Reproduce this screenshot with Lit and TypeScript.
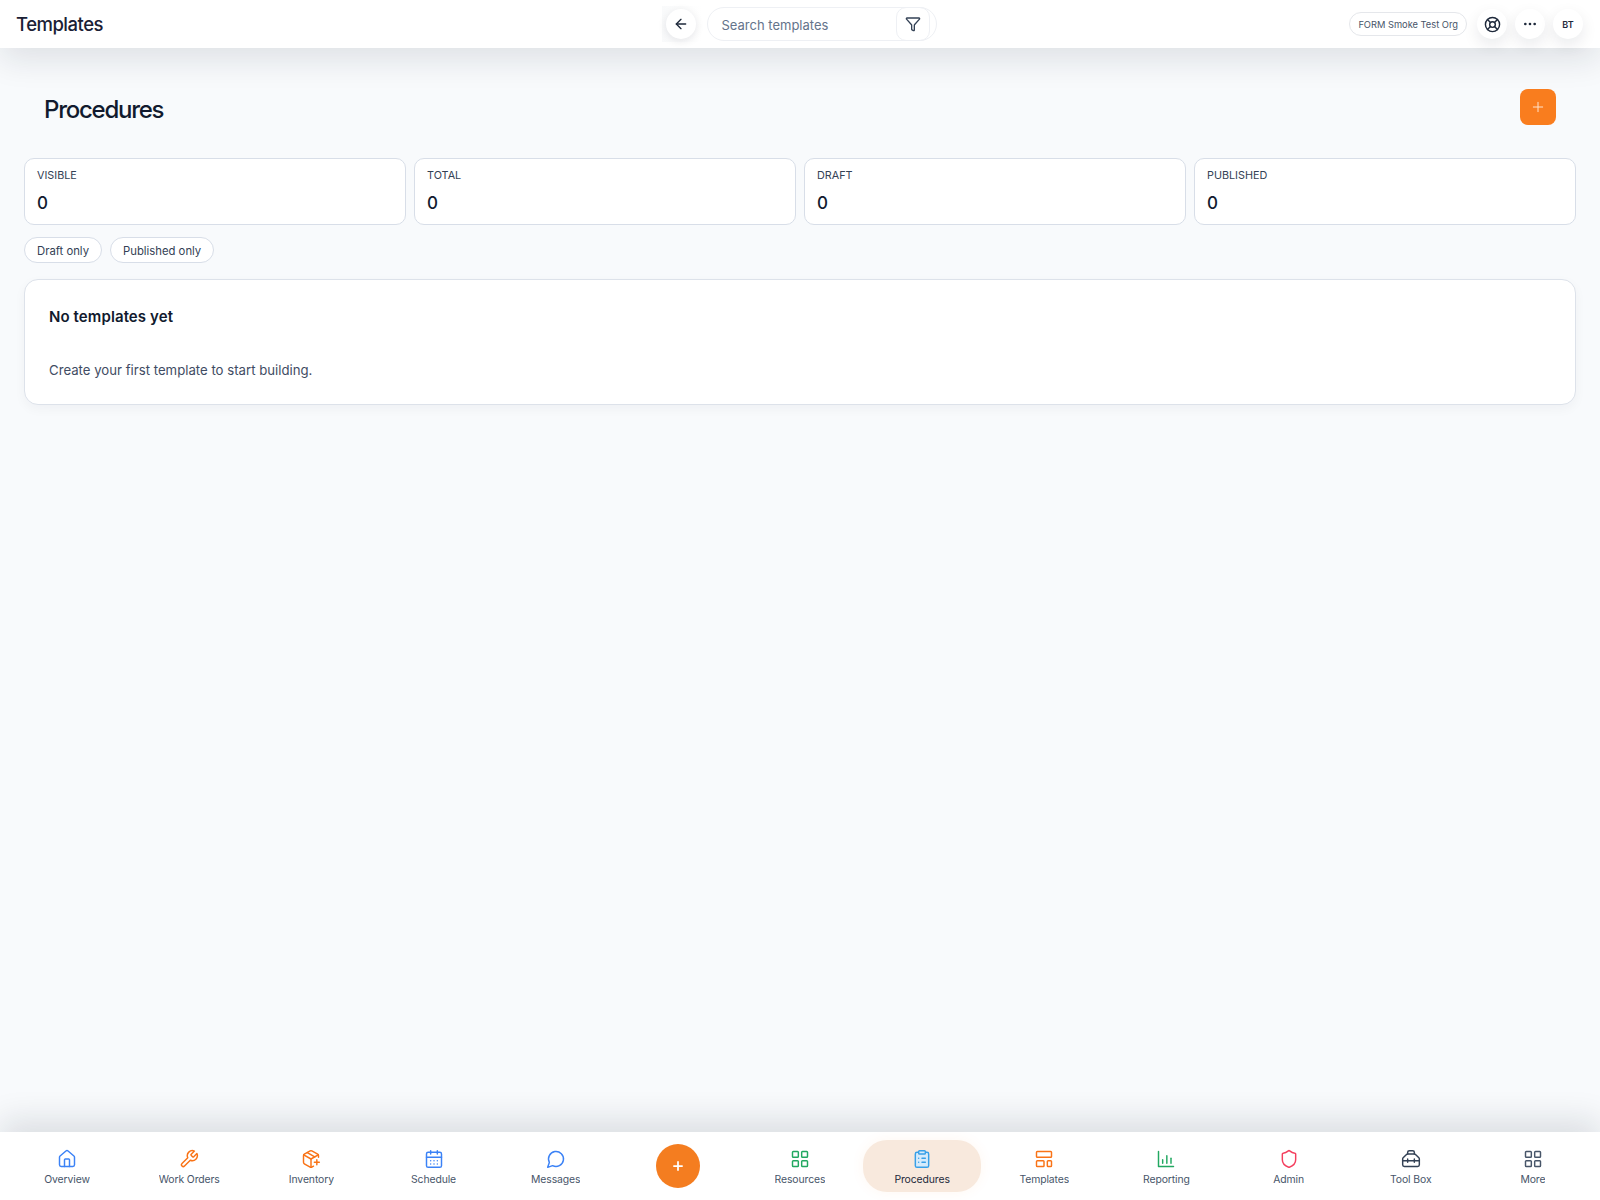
import { LitElement, html, svg, css } from 'lit';
import { customElement } from 'lit/decorators.js';

const ICONS: Record<string, unknown> = {
  home: svg`<path d="M15 21v-8a1 1 0 0 0-1-1h-4a1 1 0 0 0-1 1v8"/><path d="M3 10a2 2 0 0 1 .709-1.528l7-5.999a2 2 0 0 1 2.582 0l7 5.999A2 2 0 0 1 21 10v9a2 2 0 0 1-2 2H5a2 2 0 0 1-2-2z"/>`,
  wrench: svg`<path d="M14.7 6.3a1 1 0 0 0 0 1.4l1.6 1.6a1 1 0 0 0 1.4 0l3.77-3.77a6 6 0 0 1-7.94 7.94l-6.91 6.91a2.12 2.12 0 0 1-3-3l6.91-6.91a6 6 0 0 1 7.94-7.94l-3.76 3.76z"/>`,
  packagePlus: svg`<path d="M16 16h6"/><path d="M19 13v6"/><path d="M21 10V8a2 2 0 0 0-1-1.73l-7-4a2 2 0 0 0-2 0l-7 4A2 2 0 0 0 3 8v8a2 2 0 0 0 1 1.73l7 4a2 2 0 0 0 2 0l2-1.14"/><path d="M16.5 9.4 7.55 4.24"/><path d="M3.29 7 12 12l8.71-5"/><path d="M12 22V12"/>`,
  calendar: svg`<path d="M8 2v4"/><path d="M16 2v4"/><rect x="3" y="4" width="18" height="18" rx="2"/><path d="M3 10h18"/><path d="M8 14h.01"/><path d="M12 14h.01"/><path d="M16 14h.01"/><path d="M8 18h.01"/><path d="M12 18h.01"/><path d="M16 18h.01"/>`,
  message: svg`<path d="M7.9 20A9 9 0 1 0 4 16.1L2 22Z"/>`,
  grid: svg`<rect x="3" y="3" width="7" height="7" rx="1"/><rect x="14" y="3" width="7" height="7" rx="1"/><rect x="14" y="14" width="7" height="7" rx="1"/><rect x="3" y="14" width="7" height="7" rx="1"/>`,
  clipboard: svg`<path fill="#d6ebfb" d="M16 4h2a2 2 0 0 1 2 2v14a2 2 0 0 1-2 2H6a2 2 0 0 1-2-2V6a2 2 0 0 1 2-2h2"/><rect x="8" y="2" width="8" height="4" rx="1" fill="#d6ebfb"/><path d="M12 11h4"/><path d="M12 16h4"/><path d="M8 11h.01"/><path d="M8 16h.01"/>`,
  template: svg`<rect x="3" y="3" width="18" height="7" rx="1"/><rect x="3" y="14" width="9" height="7" rx="1"/><rect x="16" y="14" width="5" height="7" rx="1"/>`,
  chart: svg`<path d="M3 3v18h18"/><path d="M8 17v-4"/><path d="M13 17V8"/><path d="M18 17v-6"/>`,
  shield: svg`<path d="M20 13c0 5-3.5 7.5-7.66 8.95a1 1 0 0 1-.67-.01C7.5 20.5 4 18 4 13V6a1 1 0 0 1 1-1c2 0 4.5-1.2 6.24-2.72a1.17 1.17 0 0 1 1.52 0C14.51 3.81 17 5 19 5a1 1 0 0 1 1 1z"/>`,
  toolbox: svg`<path d="M16 12v4"/><path d="M16 6a2 2 0 0 1 1.414.586l4 4A2 2 0 0 1 22 12v7a2 2 0 0 1-2 2H4a2 2 0 0 1-2-2v-7a2 2 0 0 1 .586-1.414l4-4A2 2 0 0 1 8 6z"/><path d="M16 6V4a2 2 0 0 0-2-2h-4a2 2 0 0 0-2 2v2"/><path d="M2 14h20"/><path d="M8 12v4"/>`,
  buoy: svg`<circle cx="12" cy="12" r="10"/><circle cx="12" cy="12" r="4"/><path d="m4.93 4.93 4.24 4.24"/><path d="m14.83 9.17 4.24-4.24"/><path d="m14.83 14.83 4.24 4.24"/><path d="m9.17 14.83-4.24 4.24"/>`,
  funnel: svg`<path d="M10 20a1 1 0 0 0 .553.895l2 1A1 1 0 0 0 14 21v-7a2 2 0 0 1 .517-1.341L21.74 4.67A1 1 0 0 0 21 3H3a1 1 0 0 0-.742 1.67l7.225 7.989A2 2 0 0 1 10 14z"/>`,
  back: svg`<path d="m12 19-7-7 7-7"/><path d="M19 12H5"/>`,
  plus: svg`<path d="M5 12h14"/><path d="M12 5v14"/>`,
  dots: svg`<circle cx="5" cy="12" r="1"/><circle cx="12" cy="12" r="1"/><circle cx="19" cy="12" r="1"/>`
};

const icon = (name: string, size: number, color: string, sw = 2) => html`<svg
  width=${size}
  height=${size}
  viewBox="0 0 24 24"
  fill="none"
  stroke=${color}
  stroke-width=${sw}
  stroke-linecap="round"
  stroke-linejoin="round"
>${ICONS[name]}</svg>`;

const STATS = [
  { label: 'VISIBLE', value: 0 },
  { label: 'TOTAL', value: 0 },
  { label: 'DRAFT', value: 0 },
  { label: 'PUBLISHED', value: 0 }
];

const NAV = [
  { label: 'Overview', icon: 'home', color: '#3b82f6' },
  { label: 'Work Orders', icon: 'wrench', color: '#f97316' },
  { label: 'Inventory', icon: 'packagePlus', color: '#f97316' },
  { label: 'Schedule', icon: 'calendar', color: '#3b82f6' },
  { label: 'Messages', icon: 'message', color: '#3b82f6' },
  { fab: true },
  { label: 'Resources', icon: 'grid', color: '#22a861' },
  { label: 'Procedures', icon: 'clipboard', color: '#38a0e8', active: true },
  { label: 'Templates', icon: 'template', color: '#f97316' },
  { label: 'Reporting', icon: 'chart', color: '#22a861' },
  { label: 'Admin', icon: 'shield', color: '#f43f5e' },
  { label: 'Tool Box', icon: 'toolbox', color: '#334155' },
  { label: 'More', icon: 'grid', color: '#475569' }
] as Array<{ label?: string; icon?: string; color?: string; active?: boolean; fab?: boolean }>;

@customElement('app-root')
export class AppRoot extends LitElement {
  static styles = css`
    :host {
      display: flex;
      flex-direction: column;
      height: 1200px;
      background: #f8fafc;
      font-family: Inter, 'Noto Sans', sans-serif;
      color: #111827;
      overflow: hidden;
    }

    .topbar {
      flex: none;
      position: relative;
      z-index: 2;
      height: 48px;
      display: grid;
      grid-template-columns: 1fr auto 1fr;
      align-items: center;
      padding: 0 17px 0 16px;
      background: #fff;
      box-shadow: 0 12px 32px rgba(15, 23, 42, 0.11);
    }
    .page-name {
      font-size: 18.5px;
      font-weight: 500;
      letter-spacing: -0.5px;
      color: #1a2035;
    }
    .search-row {
      display: flex;
      align-items: center;
      gap: 11px;
      padding: 0 2px 0 4px;
      height: 36px;
      margin-left: 1px;
      background: linear-gradient(90deg, #f9fafb, #fff 40px);
    }
    .circle {
      width: 30px;
      height: 30px;
      border-radius: 50%;
      background: #fff;
      display: flex;
      align-items: center;
      justify-content: center;
      box-shadow: 0 2px 8px rgba(15, 23, 42, 0.1);
      font-size: 9px;
      font-weight: 600;
      color: #1e293b;
    }
    .search {
      width: 230px;
      height: 34px;
      box-sizing: border-box;
      display: flex;
      align-items: center;
      justify-content: space-between;
      padding: 0 6px 0 14px;
      border: 1px solid #eef0f4;
      border-radius: 17px;
      font-size: 13px;
      color: #64748b;
    }
    .search span {
      padding-top: 1px;
    }
    .filter {
      width: 32px;
      height: 32px;
      border: 1px solid #eef0f4;
      border-radius: 10px;
      display: flex;
      align-items: center;
      justify-content: center;
    }
    .top-actions {
      display: flex;
      align-items: center;
      justify-content: flex-end;
      gap: 8px;
    }
    .top-actions .circle {
      box-shadow: 0 6px 16px rgba(15, 23, 42, 0.09);
    }
    .org {
      height: 24px;
      box-sizing: border-box;
      display: flex;
      align-items: center;
      padding: 0 8px;
      margin-right: 2px;
      border: 1px solid #e5e7eb;
      border-radius: 12px;
      font-size: 9.3px;
      color: #475569;
    }

    main {
      flex: 1;
      padding: 0 24px;
    }
    .heading {
      height: 110px;
      display: flex;
      align-items: center;
      justify-content: space-between;
      padding: 12px 20px 0 20px;
      box-sizing: border-box;
    }
    h1 {
      margin: 0;
      font-size: 24px;
      font-weight: 500;
      letter-spacing: -1.25px;
      color: #111a2e;
    }
    .add {
      width: 36px;
      height: 36px;
      border-radius: 8px;
      background: #f97d1e;
      display: flex;
      align-items: center;
      justify-content: center;
      margin-top: -4px;
    }
    .stats {
      display: grid;
      grid-template-columns: repeat(4, 1fr);
      gap: 8px;
    }
    .stat {
      height: 67px;
      box-sizing: border-box;
      padding: 10px 12px;
      background: #fff;
      border: 1px solid #d8dee8;
      border-radius: 10px;
    }
    .stat-label {
      font-size: 10.8px;
      line-height: 14px;
      color: #334155;
    }
    .stat-value {
      margin-top: 9px;
      font-size: 17px;
      line-height: 22px;
      font-weight: 500;
      color: #111a2e;
    }
    .chips {
      display: flex;
      gap: 8px;
      margin-top: 12px;
    }
    .chip {
      height: 26px;
      box-sizing: border-box;
      display: flex;
      align-items: center;
      padding: 1px 12px 0;
      background: #fff;
      border: 1px solid #d8dee8;
      border-radius: 13px;
      font-size: 11.3px;
      color: #334155;
    }
    .panel {
      margin-top: 16px;
      height: 126px;
      box-sizing: border-box;
      padding: 27px 24px;
      background: #fff;
      border: 1px solid #dde2ea;
      border-radius: 14px;
      box-shadow: 0 4px 12px rgba(15, 23, 42, 0.04);
    }
    .panel h2 {
      margin: 0;
      font-size: 15px;
      line-height: 20px;
      font-weight: 600;
      letter-spacing: 0.1px;
      color: #111a2e;
    }
    .panel p {
      margin: 34px 0 0;
      font-size: 13.2px;
      line-height: 18px;
      color: #3f4c63;
    }

    nav {
      flex: none;
      position: relative;
      height: 68px;
      padding: 0 6px;
      display: grid;
      grid-template-columns: repeat(13, 1fr);
      background: #fff;
      box-shadow: 0 -12px 32px rgba(15, 23, 42, 0.12);
    }
    .item {
      display: flex;
      flex-direction: column;
      align-items: center;
      gap: 4px;
      padding-top: 17px;
      font-size: 10.4px;
      letter-spacing: -0.1px;
      color: #475569;
    }
    .item span {
      display: block;
      height: 13px;
      line-height: 14px;
      overflow: hidden;
    }
    .item svg {
      display: block;
    }
    .item.active {
      margin: 8px 2px;
      padding-top: 9px;
      height: 52px;
      box-sizing: border-box;
      background: #f8e9dd;
      border-radius: 24px;
      color: #1e293b;
      box-shadow: 0 0 14px rgba(249, 125, 30, 0.06);
    }
    .fab-cell {
      display: flex;
      align-items: center;
      justify-content: center;
    }
    .fab {
      width: 44px;
      height: 44px;
      border-radius: 50%;
      background: #f47d20;
      display: flex;
      align-items: center;
      justify-content: center;
    }
  `;

  render() {
    return html`
      <header class="topbar">
        <div class="page-name">Templates</div>
        <div class="search-row">
          <div class="circle">${icon('back', 16, '#1e293b')}</div>
          <div class="search">
            <span>Search templates</span>
            <div class="filter">${icon('funnel', 16, '#334155')}</div>
          </div>
        </div>
        <div class="top-actions">
          <div class="org">FORM Smoke Test Org</div>
          <div class="circle">${icon('buoy', 17, '#1e293b')}</div>
          <div class="circle">${icon('dots', 16, '#1e293b')}</div>
          <div class="circle">BT</div>
        </div>
      </header>

      <main>
        <div class="heading">
          <h1>Procedures</h1>
          <div class="add">${icon('plus', 16, '#ffe3cc', 1.5)}</div>
        </div>
        <div class="stats">
          ${STATS.map(
            s => html`
              <div class="stat">
                <div class="stat-label">${s.label}</div>
                <div class="stat-value">${s.value}</div>
              </div>
            `
          )}
        </div>
        <div class="chips">
          <div class="chip">Draft only</div>
          <div class="chip">Published only</div>
        </div>
        <section class="panel">
          <h2>No templates yet</h2>
          <p>Create your first template to start building.</p>
        </section>
      </main>

      <nav>
        ${NAV.map(n =>
          n.fab
            ? html`<div class="fab-cell"><div class="fab">${icon('plus', 14, '#fff', 3)}</div></div>`
            : html`
                <div class="item ${n.active ? 'active' : ''}">
                  ${icon(n.icon!, 20, n.color!, 1.75)}
                  <span>${n.label}</span>
                </div>
              `
        )}
      </nav>
    `;
  }
}
